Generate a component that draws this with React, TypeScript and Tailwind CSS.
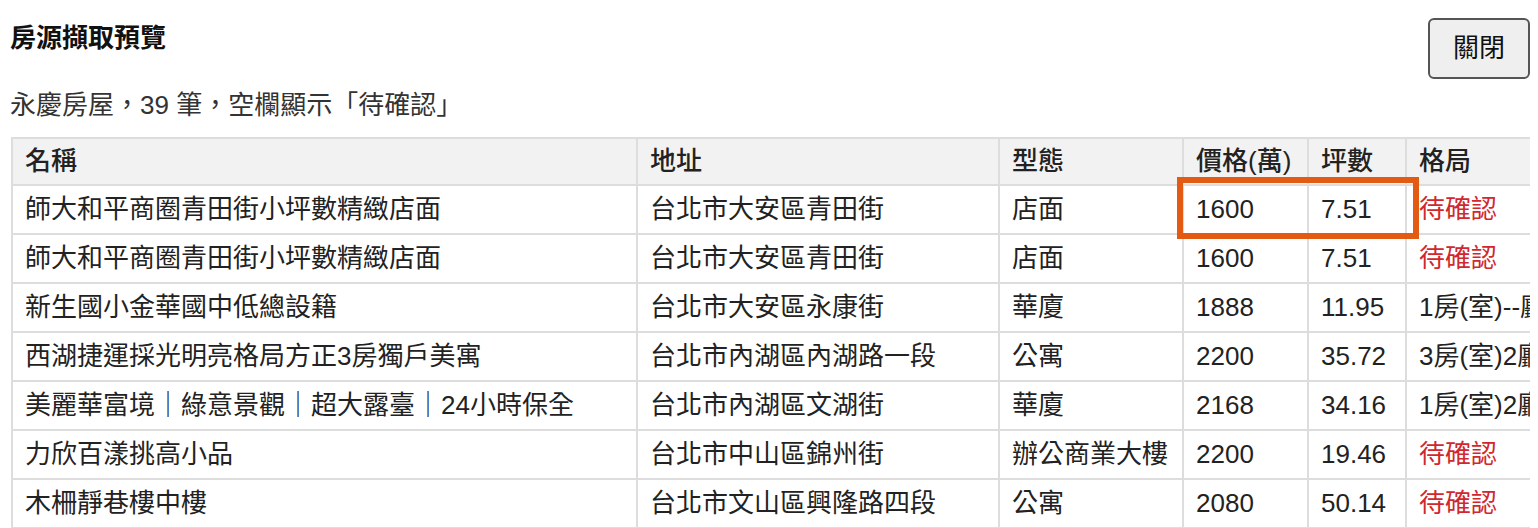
import React from "react";

type Row = {
  name: string;
  address: string;
  type: string;
  price: string;
  area: string;
  layout?: string;
};

const rows: Row[] = [
  { name: "師大和平商圈青田街小坪數精緻店面", address: "台北市大安區青田街", type: "店面", price: "1600", area: "7.51" },
  { name: "師大和平商圈青田街小坪數精緻店面", address: "台北市大安區青田街", type: "店面", price: "1600", area: "7.51" },
  { name: "新生國小金華國中低總設籍", address: "台北市大安區永康街", type: "華廈", price: "1888", area: "11.95", layout: "1房(室)--廳--衛" },
  { name: "西湖捷運採光明亮格局方正3房獨戶美寓", address: "台北市內湖區內湖路一段", type: "公寓", price: "2200", area: "35.72", layout: "3房(室)2廳1衛" },
  { name: "美麗華富境｜綠意景觀｜超大露臺｜24小時保全", address: "台北市內湖區文湖街", type: "華廈", price: "2168", area: "34.16", layout: "1房(室)2廳1衛" },
  { name: "力欣百漾挑高小品", address: "台北市中山區錦州街", type: "辦公商業大樓", price: "2200", area: "19.46" },
  { name: "木柵靜巷樓中樓", address: "台北市文山區興隆路四段", type: "公寓", price: "2080", area: "50.14" },
];

const cell = "border-2 border-[#dddddd] px-3 py-[5px] text-left whitespace-nowrap overflow-hidden";

const Pending = () => <span className="text-[#d0282e]">待確認</span>;

export default function App() {
  return (
    <div className="min-h-screen bg-white pl-[10px] pr-[8px] pt-[10px] font-['Liberation_Sans','Noto_Sans_CJK_TC',sans-serif] text-[26px] text-[#222]">
      {/* Header */}
      <div className="flex items-start justify-between">
        <h1 className="mt-[10px] text-[26px] leading-[36px] font-bold text-[#111]">房源擷取預覽</h1>
        <button className="mt-[8px] h-[61px] w-[102px] rounded-md border-2 border-[#555] bg-[#efefef] text-[26px] text-[#111]">
          關閉
        </button>
      </div>

      <p className="mt-[8px] leading-[36px] text-[#333]">永慶房屋，39 筆，空欄顯示「待確認」</p>

      {/* Table */}
      <div className="relative mt-[14px] overflow-hidden pl-px">
        <table className="w-[1714px] table-fixed border-collapse">
          <colgroup>
            <col className="w-[625px]" />
            <col className="w-[362px]" />
            <col className="w-[184px]" />
            <col className="w-[125px]" />
            <col className="w-[98px]" />
            <col className="w-[320px]" />
          </colgroup>
          <thead>
            <tr className="bg-[#f2f2f2]">
              {["名稱", "地址", "型態", "價格(萬)", "坪數", "格局"].map((h) => (
                <th key={h} className={`${cell} leading-[35px] font-medium`}>
                  {h}
                </th>
              ))}
            </tr>
          </thead>
          <tbody>
            {rows.map((r, i) => (
              <tr key={i}>
                <td className={`${cell} leading-[37px]`}>{r.name}</td>
                <td className={`${cell} leading-[37px]`}>{r.address}</td>
                <td className={`${cell} leading-[37px]`}>{r.type}</td>
                <td className={`${cell} leading-[37px]`}>{r.price}</td>
                <td className={`${cell} leading-[37px]`}>{r.area}</td>
                <td className={`${cell} leading-[37px]`}>{r.layout ? r.layout : <Pending />}</td>
              </tr>
            ))}
          </tbody>
        </table>

        {/* annotation box */}
        <div className="pointer-events-none absolute left-[1167px] top-[40px] h-[62px] w-[242px] border-[6px] border-[#e35a12]" />
      </div>
    </div>
  );
}
